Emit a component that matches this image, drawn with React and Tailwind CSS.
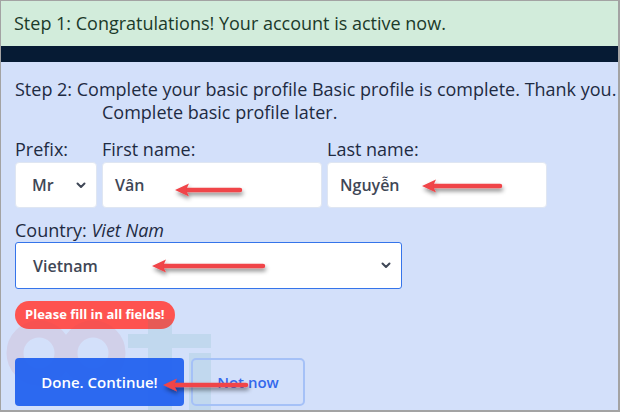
import React from "react";

function Chevron() {
  return (
    <svg width="10" height="7" viewBox="0 0 10 7" className="shrink-0">
      <path d="M1.5 1.5 L5 5 L8.5 1.5" fill="none" stroke="#3f4756" strokeWidth="2" strokeLinecap="round" strokeLinejoin="round" />
    </svg>
  );
}

function Arrow({ left, top, len }) {
  return (
    <svg
      className="absolute pointer-events-none"
      style={{ left: left - 2, top: top - 10, width: len + 10, height: 26 }}
      viewBox={`0 0 ${len + 10} 26`}
    >
      <defs>
        <filter id={`sh${left}${top}`} x="-20%" y="-50%" width="140%" height="200%">
          <feDropShadow dx="1" dy="3" stdDeviation="2" floodColor="#000" floodOpacity="0.45" />
        </filter>
      </defs>
      <g filter={`url(#sh${left}${top})`}>
        <line x1="12" y1="10" x2={len} y2="10" stroke="#f04448" strokeWidth="4.5" strokeLinecap="round" />
        <path d="M2 10 L16 3.5 L13 10 L16 16.5 Z" fill="#f04448" />
      </g>
    </svg>
  );
}

export default function App() {
  const font = { fontFamily: '"Open Sans", "Noto Sans", sans-serif' };
  return (
    <div
      className="relative w-[620px] h-[412px] overflow-hidden bg-[#d3e0fa] border-l border-t border-r-2 border-b-2 border-[#a3a3a3]"
      style={font}
    >
      <div className="h-[45px] bg-[#d2ecdb] flex items-center pl-[13px] text-[18px] text-[#1b3a2a]">
        Step 1: Congratulations! Your account is active now.
      </div>
      <div className="h-[16px] bg-[#061b34]" />

      <div className="pl-[14px] pt-[16px] text-[18px] leading-[23px] text-[#1e2b42]">
        <div className="whitespace-nowrap">Step 2: Complete your basic profile Basic profile is complete. Thank you.</div>
        <div className="pl-[87px]">Complete basic profile later.</div>
      </div>

      <div className="flex gap-[5px] pl-[14px] mt-[14px] text-[18px] text-[#1e2b42]">
        <div className="w-[82px] flex flex-col">
          <div className="h-[23px] leading-[23px]">Prefix:</div>
          <div className="h-[46px] mt-px bg-white rounded-[4px] border border-[#dfe6f2] flex items-center justify-between pl-[16px] pr-[10px] text-[16px] font-semibold text-[#3f4756]">
            <span>Mr</span>
            <Chevron />
          </div>
        </div>
        <div className="w-[220px] flex flex-col">
          <div className="h-[23px] leading-[23px]">First name:</div>
          <div className="h-[46px] mt-px bg-white rounded-[4px] border border-[#dfe6f2] flex items-center pl-[12px] text-[16px] font-semibold text-[#3f4756]">
            Vân
          </div>
        </div>
        <div className="w-[220px] flex flex-col">
          <div className="h-[23px] leading-[23px]">Last name:</div>
          <div className="h-[46px] mt-px bg-white rounded-[4px] border border-[#dfe6f2] flex items-center pl-[12px] text-[16px] font-semibold text-[#3f4756]">
            Nguyễn
          </div>
        </div>
      </div>

      <div className="pl-[14px] mt-[11px] text-[18px] text-[#1e2b42]">
        <div className="h-[23px] leading-[23px]">
          Country: <span className="italic">Viet Nam</span>
        </div>
        <div className="w-[387px] h-[47px] bg-white rounded-[3px] border border-[#3574ea] flex items-center justify-between pl-[17px] pr-[10px] text-[16px] font-semibold text-[#3f4756]">
          <span>Vietnam</span>
          <Chevron />
        </div>
      </div>

      <div className="relative pl-[14px] mt-[12px]">
        <div className="inline-flex items-center h-[28px] px-[10px] rounded-full bg-[#fe5350] text-white text-[13px] font-bold">
          Please fill in all fields!
        </div>
      </div>

      <svg className="absolute left-0 top-[300px] pointer-events-none" width="240" height="112" viewBox="0 0 240 112">
        <g opacity="0.1">
          <circle cx="38" cy="52" r="24" fill="none" stroke="#c24a5a" strokeWidth="17" />
          <circle cx="92" cy="52" r="24" fill="none" stroke="#c24a5a" strokeWidth="17" />
          <rect x="147" y="18" width="24" height="94" fill="#2a9c8a" />
          <rect x="127" y="33" width="83" height="14" fill="#2a9c8a" />
          <rect x="188" y="52" width="22" height="60" fill="#2a9c8a" />
        </g>
      </svg>

      <div className="relative flex gap-[7px] pl-[14px] mt-[29px]">
        <div className="w-[169px] h-[48px] rounded-[4px] bg-[#2362ef]/95 flex items-center justify-center text-white text-[15px] font-semibold">
          Done. Continue!
        </div>
        <div className="w-[114px] h-[48px] rounded-[5px] border-2 border-[#a5c1f7] flex items-center justify-center text-[#3468ec] text-[15px] font-semibold">
          Not now
        </div>
      </div>

      <Arrow left={174} top={189} len={67} />
      <Arrow left={421} top={185} len={80} />
      <Arrow left={151} top={265} len={113} />
      <Arrow left={162} top={384} len={85} />
    </div>
  );
}
